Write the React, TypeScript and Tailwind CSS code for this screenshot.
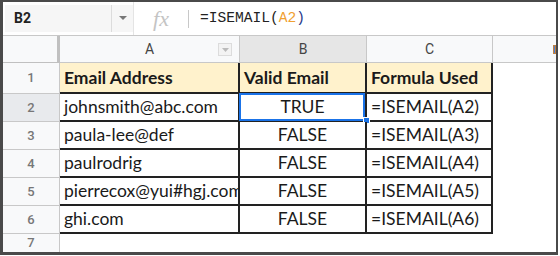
import React from "react";

const rows = [
  { n: 1, a: "Email Address", b: "Valid Email", c: "Formula Used", head: true, h: "h-[31px]" },
  { n: 2, a: "johnsmith@abc.com", b: "TRUE", c: "=ISEMAIL(A2)", h: "h-[28px]" },
  { n: 3, a: "paula-lee@def", b: "FALSE", c: "=ISEMAIL(A3)", h: "h-[28px]" },
  { n: 4, a: "paulrodrig", b: "FALSE", c: "=ISEMAIL(A4)", h: "h-[28px]" },
  { n: 5, a: "pierrecox@yui#hgj.com", b: "FALSE", c: "=ISEMAIL(A5)", h: "h-[28px]" },
  { n: 6, a: "ghi.com", b: "FALSE", c: "=ISEMAIL(A6)", h: "h-[28px]" },
];

const cellFont = { fontFamily: "Lato, 'Open Sans', sans-serif" };

export default function App() {
  return (
    <div className="w-[560px] h-[256px] bg-white">
      <div className="w-[558px] h-[255px] border-[#4a4a4a] border-t-2 border-r-2 border-b-[3px] border-l-[3px] flex flex-col overflow-hidden">
        {/* formula bar */}
        <div className="h-[33px] flex items-center bg-white shrink-0">
          <div className="ml-[2px] h-[27px] w-[106px] bg-[#f6f6f6] flex items-center pl-[9px] text-[14px] font-bold text-[#222]" style={{ fontFamily: "Roboto, Arial, sans-serif" }}>
            B2
          </div>
          <div className="h-[27px] w-[22px] bg-[#f6f6f6] border-l border-[#dcdcdc] flex items-center justify-center">
            <svg width="8" height="5" viewBox="0 0 8 5"><path d="M0 0 L8 0 L4 4 Z" fill="#777" /></svg>
          </div>
          <div className="h-[33px] w-px bg-[#e4e4e4]" />
          <div className="w-[54px] flex items-center justify-center text-[#c4c4c4] text-[22px] italic" style={{ fontFamily: "'Liberation Serif', serif" }}>
            fx
          </div>
          <div className="h-[18px] w-px bg-[#c8c8c8]" />
          <div className="pl-[11px] text-[14.6px] text-[#222] pt-[1px]" style={{ fontFamily: "'Liberation Mono', monospace" }}>
            =ISEMAIL(<span className="text-[#f0a030]">A2</span><span className="text-[#2a3a8a]">)</span>
          </div>
        </div>
        <div className="h-px bg-[#c8c8c8] shrink-0" />
        {/* column headers */}
        <div className="h-[27px] flex shrink-0 border-b border-[#c8c8c8] text-[#444] text-[14px]" style={{ fontFamily: "Roboto, Arial, sans-serif" }}>
          <div className="w-[57px] bg-[#f8f9fa] border-r-[3px] border-b-[3px] border-[#c0c0c0] h-[29px]" />
          <div className="w-[180px] bg-[#f8f9fa] border-r border-[#c8c8c8] relative flex items-center justify-center">
            A
            <div className="absolute left-[158px] top-[7px] w-[14px] h-[13px] border border-[#dcdcdc] bg-[#f3f3f3] flex items-center justify-center">
              <svg width="7" height="4" viewBox="0 0 7 4"><path d="M0 0 L7 0 L3.5 4 Z" fill="#bbb" /></svg>
            </div>
          </div>
          <div className="w-[127px] bg-[#e6e6e6] border-r border-[#c8c8c8] flex items-center justify-center">B</div>
          <div className="w-[126px] bg-[#f8f9fa] border-r border-[#c8c8c8] flex items-center justify-center">C</div>
          <div className="flex-1 bg-[#f8f9fa] flex items-center justify-end overflow-hidden">
            <span className="w-[3px] h-[9px] bg-[#4a7fd4] border border-[#c08040]" />
          </div>
        </div>
        {/* data rows */}
        {rows.map((r) => (
          <div key={r.n} className={`${r.h} flex shrink-0`}>
            <div className={`w-[57px] border-r border-b border-[#c8c8c8] ${r.n === 2 ? "bg-[#e8eaed]" : "bg-[#f8f9fa]"} flex items-center justify-center text-[13px] font-medium text-[#777]`} style={{ fontFamily: "Roboto, Arial, sans-serif" }}>
              {r.n}
            </div>
            <div className={`w-[180px] border-r-2 border-b-2 border-[#222] ${r.head ? "bg-[#fff2cc] font-bold" : "bg-white"} flex items-center pl-[4px] pt-[1px] text-[17.5px] text-[#1a1a1a] overflow-hidden whitespace-nowrap`} style={cellFont}>
              {r.a}
            </div>
            <div className={`w-[127px] border-r-2 border-b-2 border-[#222] ${r.head ? "bg-[#fff2cc] font-bold justify-start pl-[4px]" : "bg-white justify-center"} flex items-center pt-[1px] text-[17.5px] text-[#1a1a1a] relative whitespace-nowrap`} style={cellFont}>
              {r.b}
              {r.n === 2 && (
                <>
                  <div className="absolute left-0 top-0 w-[126px] h-[28px] border-2 border-[#1a73e8]" style={{ marginTop: "-1px", marginLeft: "-1px" }} />
                  <div className="absolute right-[-5px] bottom-[-4px] w-[7px] h-[7px] bg-[#1a73e8] border border-white" />
                </>
              )}
            </div>
            <div className={`w-[126px] border-r-2 border-b-2 border-[#222] ${r.head ? "bg-[#fff2cc] font-bold" : "bg-white"} flex items-center pl-[4px] pt-[1px] text-[17.5px] text-[#1a1a1a] whitespace-nowrap overflow-hidden`} style={cellFont}>
              {r.c}
            </div>
            <div className="flex-1 bg-white" />
          </div>
        ))}
        <div className="h-[18px] flex shrink-0">
          <div className="w-[57px] border-r border-[#c8c8c8] bg-[#f8f9fa] flex items-center justify-center text-[13px] font-medium text-[#777]" style={{ fontFamily: "Roboto, Arial, sans-serif" }}>
            7
          </div>
          <div className="flex-1 bg-white" />
        </div>
      </div>
    </div>
  );
}
